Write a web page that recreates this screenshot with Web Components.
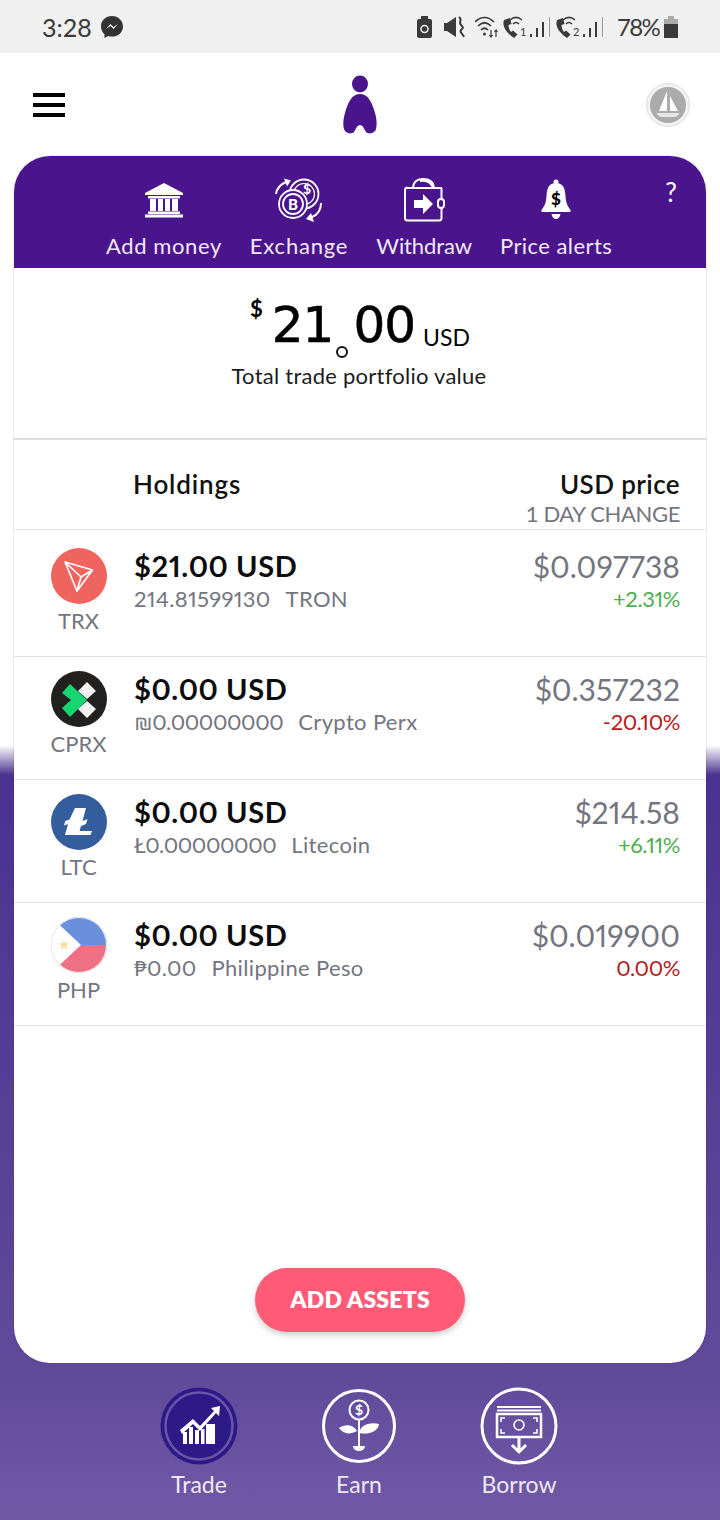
<!DOCTYPE html>
<html lang="en">
<head>
<meta charset="utf-8">
<title>Trade portfolio</title>
<style>
  html, body { margin: 0; padding: 0; }
  body {
    width: 720px;
    height: 1520px;
    overflow: hidden;
    font-family: Lato, "Open Sans", sans-serif;
    background: linear-gradient(#fff 745px, #4a3290 775px, #5f4a9a 1370px, #7159a6 1520px);
  }
</style>
</head>
<body>
<status-bar></status-bar>
<app-header></app-header>
<trade-card>
  <action-bar slot="top">
    <action-item label="Add money" style="--ls:.6px">
      <svg viewBox="0 0 40 36" width="40" height="36" fill="#fff"><path d="M20 1 39 11v2H1v-2z"/><rect x="4" y="14" width="32" height="2.500"/><rect x="6" y="17" width="6" height="12"/><rect x="14" y="17" width="5" height="12"/><rect x="21" y="17" width="5" height="12"/><rect x="28" y="17" width="6" height="12"/><rect x="4" y="29.500" width="32" height="2.500"/><rect x="1" y="32.500" width="38" height="3"/></svg>
    </action-item>
    <action-item label="Exchange" style="--ls:.8px">
      <svg viewBox="0 0 50 46" width="50" height="46" fill="none" stroke="#fff" stroke-width="1.800"><circle cx="30" cy="17" r="14.500"/><circle cx="30" cy="17" r="10.500" stroke-width="1.200"/><circle cx="19" cy="27" r="14" fill="#4a148c"/><circle cx="19" cy="27" r="10"/><path d="M2 17C3 11 7 7 12 5" stroke-width="2"/><path d="M10 1.500l7 2-4 6z" fill="#fff" stroke="none"/><path d="M47 26c0 7-4 12-9 14" stroke-width="2"/><path d="M40 45l-8-3 5-6z" fill="#fff" stroke="none"/><text x="19" y="32.500" font-family="Lato, sans-serif" font-weight="900" font-size="15" fill="#fff" stroke="none" text-anchor="middle">B</text><text x="33" y="17" font-family="Lato, sans-serif" font-weight="700" font-size="14" fill="#fff" stroke="none" text-anchor="middle">$</text></svg>
    </action-item>
    <action-item label="Withdraw" style="--ls:-.1px">
      <svg viewBox="0 0 44 44" width="44" height="44" fill="none" stroke="#fff" stroke-width="2"><path d="M5 10h35M11 9C12 2 17 1 21 1c5 0 10 2 11 8M18 3c4-1 11 0 13 7"/><path d="M3 12v28c0 1.500 1 2.500 2.500 2.500H37c1.500 0 2.500-1 2.500-2.500V30M3 12c0-1.500 1-2.500 2.500-2.500M39.500 10v11"/><rect x="36" y="21" width="6" height="9" rx="3"/><path d="M12 22h9v-6l10 10-10 10v-6h-9z" fill="#fff" stroke="none"/></svg>
    </action-item>
    <action-item label="Price alerts" style="--ls:.45px">
      <svg viewBox="0 0 30 42" width="30" height="42" fill="#fff"><circle cx="15" cy="3" r="2.500"/><path d="M15 4c7 0 9 5 9.500 13 .4 7 2 10 5 14v2H.5v-2c3-4 4.600-7 5-14C6 9 8 4 15 4z"/><path d="M10.500 35h9c-.5 3-2.300 5-4.500 5s-4-2-4.500-5z"/><text x="15" y="26" font-family="Lato, sans-serif" font-weight="900" font-size="17" fill="#000" text-anchor="middle">$</text></svg>
    </action-item>
  </action-bar>
  <portfolio-total></portfolio-total>
  <holdings-head></holdings-head>

  <asset-row symbol="TRX" amount="$21.00 USD" qty="214.81599130" name="TRON" price="$0.097738" change="+2.31%" tone="up" style="--qty-ls:.3px">
    <svg slot="icon" viewBox="0 0 56 56" width="56" height="56"><circle cx="28" cy="28" r="28" fill="#f0645f"/><path d="M14 14 41.500 22 26 43zM14 14 30 29 41.500 22M30 29 26 43" fill="none" stroke="#fff" stroke-width="1.700" stroke-linejoin="round"/></svg>
  </asset-row>
  <asset-row symbol="CPRX" amount="$0.00 USD" qty="₪0.00000000" name="Crypto Perx" price="$0.357232" change="-20.10%" tone="down" style="--qty-ls:-.4px">
    <svg slot="icon" viewBox="0 0 56 56" width="56" height="56"><circle cx="28" cy="28" r="28" fill="#23211f"/><path d="M11 22 19 13 36 29 19 46 11 37 20 29z" fill="#16d672"/><path d="M36 11 45 20 36 28 27 20zM36 30 45 38 36 47 27 38z" fill="#f2f2f2"/></svg>
  </asset-row>
  <asset-row symbol="LTC" amount="$0.00 USD" qty="Ł0.00000000" name="Litecoin" price="$214.58" change="+6.11%" tone="up" style="--qty-ls:-.4px">
    <svg slot="icon" viewBox="0 0 56 56" width="56" height="56"><circle cx="28" cy="28" r="28" fill="#345d9d"/><path d="M24 14h11l-3.500 13 5-2-1.500 5-5 2-1.500 5H41l-1.500 4H14l3-11-4 1.500 1.200-4.500 4.300-1.600z" fill="#fff"/></svg>
  </asset-row>
  <asset-row symbol="PHP" amount="$0.00 USD" qty="₱0.00" name="Philippine Peso" price="$0.019900" change="0.00%" tone="down" style="--qty-ls:.3px">
    <svg slot="icon" viewBox="0 0 56 56" width="56" height="56"><defs><clipPath id="php"><circle cx="28" cy="28" r="28"/></clipPath></defs><g clip-path="url(#php)"><rect width="56" height="28" fill="#6a8fdd"/><rect y="28" width="56" height="28" fill="#ee7085"/><path d="M-2-2 30 28-2 58z" fill="#fff"/><path d="M13 23l1.500 3.200 3.500.3-2.600 2.300.8 3.400-3.200-1.800-3.200 1.800.8-3.400L8 26.500l3.500-.3z" fill="#f0e3a0"/></g><circle cx="28" cy="28" r="27.500" fill="none" stroke="#f2f2f2"/></svg>
  </asset-row>

  <add-button slot="bottom">ADD ASSETS</add-button>
</trade-card>
<bottom-nav>
  <nav-item label="Trade" active>
    <svg viewBox="0 0 78 78" width="78" height="78"><circle cx="39" cy="39" r="38.500" fill="#2d1a87"/><circle cx="39" cy="39" r="33.500" fill="none" stroke="#6a55a8" stroke-width="2.500"/><path d="M20 43 33 32l7 7 14-15-3-3 9-2-1 10-3-3-16 18-7-7-11 10z" fill="#fff"/><path d="M23 45h4v12h-4zM29 40h4v17h-4zM35 43h4v14h-4zM41 42h3.500v15H41zM46 37h9v20h-9z" fill="#fff"/></svg>
  </nav-item>
  <nav-item label="Earn">
    <svg viewBox="0 0 78 78" width="78" height="78" fill="none" stroke="#fff"><circle cx="39" cy="39" r="35.500" stroke-width="3"/><circle cx="39" cy="23" r="9.500" stroke-width="2"/><text x="39" y="28" font-family="Lato, sans-serif" font-weight="700" font-size="14" fill="#fff" stroke="none" text-anchor="middle">$</text><path d="M39 33v26" stroke-width="2"/><path d="M19 41c7-5 15-3 18 3-7 4-14 3-18-3zM59 37c-8-2-18 0-20 9 9 2 19-1 20-9z" fill="#fff" stroke="none"/><path d="M33 59h12c0 3-3 5-6 5s-6-2-6-5z" fill="#fff" stroke="none"/></svg>
  </nav-item>
  <nav-item label="Borrow">
    <svg viewBox="0 0 78 78" width="78" height="78" fill="none" stroke="#fff"><circle cx="39" cy="39" r="37" stroke-width="3"/><path d="M17 20h44M17 23.500h44" stroke-width="2"/><rect x="17" y="27" width="44" height="23" stroke-width="2.500"/><circle cx="39" cy="38" r="5" stroke-width="1.600"/><path d="M21 35v-4h4M57 35v-4h-4M21 42v4h4M57 42v4h-4" stroke-width="1.600"/><path d="M39 50v15M32 58l7 7 7-7" stroke-width="3"/></svg>
  </nav-item>
</bottom-nav>

<script>
const FONT = 'Lato, "Open Sans", sans-serif'

// handset + wifi arcs + sim number + signal bars, used twice in the status bar
const simIcon = n => `
  <svg viewBox="0 0 50 24" width="50" height="24" fill="#3a3a3a">
    <path d="M2 5c-2 5 1 12 10 18l3.500-3.500-4.500-4-2 1.500c-1.500-2-2.500-4.500-2.500-7l3-1-1.500-6z"/>
    <path d="M8 5c4-3.500 8-3.500 12 0M11 9c2-2 4-2 6 0" fill="none" stroke="#3a3a3a" stroke-width="1.600"/>
    <text x="18" y="20.500" font-size="11" font-family="Lato, sans-serif">${n}</text>
    <rect x="28" y="19" width="2" height="3"/><rect x="34" y="13" width="2" height="9"/><rect x="40" y="7" width="2" height="15"/>
    <rect x="47" y="2" width="1" height="20" fill="#999"/>
  </svg>`

class StatusBar extends HTMLElement {
  constructor() {
    super()
    this.attachShadow({ mode: 'open' }).innerHTML = `
      <style>
        :host {
          display: flex;
          align-items: center;
          justify-content: space-between;
          box-sizing: border-box;
          height: 53px;
          padding: 0 42px 0 42px;
          background: #f0f0f0;
          color: #3a3a3a;
          font: 400 25px ${FONT};
        }
        .side { display: flex; align-items: center; }
        .left { gap: 8px; }
        svg { display: block; }
        .pct { width: 43px; font-size: 24px; letter-spacing: -1.700px; white-space: nowrap; }
      </style>
      <div class="side left">
        <span>3:28</span>
        <svg viewBox="0 0 24 24" width="24" height="24"><path d="M12 1C5.700 1 1 5.500 1 11.500c0 3.200 1.300 5.800 3.500 7.700V23l3.600-2c1.200.4 2.500.6 3.900.6 6.300 0 11-4.500 11-10.100S18.300 1 12 1z" fill="#333"/><path d="M6 14l4.500-5 3 3 4.500-3-4.500 5-3-3z" fill="#f0f0f0"/></svg>
      </div>
      <div class="side">
        <svg viewBox="0 0 15 24" width="15" height="24" fill="#3a3a3a"><rect x="4" y="1" width="7" height="3"/><rect x="0" y="4" width="15" height="19" rx="2"/><circle cx="7.500" cy="14" r="3.500" fill="none" stroke="#f0f0f0" stroke-width="1.500"/></svg>
        <svg viewBox="0 0 21 24" width="21" height="24" fill="#3a3a3a" style="margin-left:12px"><path d="M0 8h3l9-6v20l-9-6H0z"/><path d="M15 2c4 3-1 5 2 8s2 3 0 5 2 4 3 7" fill="none" stroke="#3a3a3a" stroke-width="2"/></svg>
        <svg viewBox="0 0 24 24" width="24" height="24" fill="none" stroke="#3a3a3a" stroke-width="1.700" style="margin-left:10px"><path d="M0 7c6-6 13-6 19 0M3 11c4.500-4.500 8.500-4.500 13 0M6 15c2.500-2.500 4.500-2.500 7 0"/><circle cx="9.500" cy="19" r="1.500" fill="#3a3a3a" stroke="none"/><path d="M16 15v7M14.500 20l1.500 2 1.500-2M21 22v-7M19.500 17l1.500-2 1.500 2" stroke-width="1.200"/></svg>
        <span style="margin-left:3px;display:block">${simIcon(1)}</span>
        <span style="margin-left:3px;display:block">${simIcon(2)}</span>
        <span class="pct" style="margin-left:12px">78%</span>
        <svg viewBox="0 0 14 24" width="14" height="24" style="margin-left:4px"><rect x="4" y="1" width="6" height="3" fill="#aaa"/><rect x="0" y="4" width="14" height="5" fill="#aaa"/><rect x="0" y="9" width="14" height="14" fill="#3a3a3a"/></svg>
      </div>
    `
  }
}

class AppHeader extends HTMLElement {
  constructor() {
    super()
    this.attachShadow({ mode: 'open' }).innerHTML = `
      <style>
        :host {
          display: flex;
          align-items: center;
          justify-content: space-between;
          box-sizing: border-box;
          height: 103px;
          padding: 0 30px 0 33px;
          background: #fff;
        }
        .menu { display: grid; gap: 6px; width: 32px; }
        .menu i { height: 4px; background: #000; }
        svg { display: block; }
      </style>
      <div class="menu"><i></i><i></i><i></i></div>
      <svg viewBox="0 0 36 60" width="36" height="60" style="margin-left:8px"><ellipse cx="18" cy="9" rx="8" ry="8.500" fill="#4a148c"/><path d="M18 19C26 19 30 27 33 38c2 7 2 12 1 16-1 4-7 6-10 3-2-3-3-7-6-7s-4 4-6 7c-3 3-9 1-10-3-1-4-1-9 1-16C6 27 10 19 18 19z" fill="#4a148c"/></svg>
      <svg viewBox="0 0 44 44" width="44" height="44"><circle cx="22" cy="22" r="21.500" fill="#f2f2f2" stroke="#ddd"/><circle cx="22" cy="22" r="18" fill="#ababab"/><path d="M21 8 13 28h8zM24 13l8 15h-8z" fill="#fff"/><path d="M10 30h24l-4 4H14z" fill="#e6e6e6"/></svg>
    `
  }
}

class TradeCard extends HTMLElement {
  constructor() {
    super()
    this.attachShadow({ mode: 'open' }).innerHTML = `
      <style>
        :host {
          display: flex;
          flex-direction: column;
          box-sizing: border-box;
          height: 1207px;
          margin: 0 14px;
          border-radius: 36px;
          overflow: hidden;
          background: #fff;
          box-shadow: 0 0 0 1px rgba(0,0,0,.07);
        }
        .bottom { margin-top: auto; display: flex; justify-content: center; padding-bottom: 31px; }
      </style>
      <slot name="top"></slot>
      <slot></slot>
      <div class="bottom"><slot name="bottom"></slot></div>
    `
  }
}

class ActionBar extends HTMLElement {
  constructor() {
    super()
    this.attachShadow({ mode: 'open' }).innerHTML = `
      <style>
        :host {
          display: block;
          position: relative;
          box-sizing: border-box;
          height: 112px;
          background: #4a148c;
        }
        .items { display: flex; gap: 28px; padding-left: 92px; }
        .help {
          position: absolute;
          top: 20px;
          right: 29px;
          color: #fff;
          font: 400 26px ${FONT};
        }
      </style>
      <div class="items"><slot></slot></div>
      <span class="help">?</span>
    `
  }
}

class ActionItem extends HTMLElement {
  constructor() {
    super()
    this.attachShadow({ mode: 'open' }).innerHTML = `
      <style>
        :host {
          display: flex;
          flex-direction: column;
          align-items: center;
          color: #f3e9fb;
          font: 400 22px ${FONT};
        }
        .icon { display: flex; align-items: center; justify-content: center; height: 50px; margin-top: 19px; }
        .label { margin-top: 8px; line-height: 26px; white-space: nowrap; letter-spacing: var(--ls, 0); }
      </style>
      <div class="icon"><slot></slot></div>
      <div class="label">${this.getAttribute('label')}</div>
    `
  }
}

class PortfolioTotal extends HTMLElement {
  constructor() {
    super()
    this.attachShadow({ mode: 'open' }).innerHTML = `
      <style>
        :host {
          display: block;
          box-sizing: border-box;
          height: 172px;
          padding-top: 28px;
          border-bottom: 2px solid #ddd;
          color: #000;
          text-align: center;
        }
        .value { display: flex; justify-content: center; align-items: baseline; height: 58px; line-height: 58px; }
        .cur { font: 700 22px ${FONT}; align-self: flex-start; line-height: 26px; margin-right: 9px; }
        .num { font: 400 50px "DejaVu Sans", sans-serif; -webkit-text-stroke: .6px #000; letter-spacing: -1px; }
        .dot { display: inline-block; position: relative; width: 20px; color: transparent; -webkit-text-stroke: 0; }
        .dot::after {
          content: "";
          position: absolute;
          left: 3px;
          bottom: -4px;
          width: 8px;
          height: 8px;
          border: 2.500px solid #111;
          border-radius: 50%;
        }
        .unit { font: 400 23px/20px ${FONT}; margin-left: 8px; align-self: flex-end; margin-bottom: 7px; }
        .caption { margin: 8px 2px 0 0; font: 400 22px ${FONT}; color: #1c1c1c; letter-spacing: .25px; }
      </style>
      <div class="value">
        <span class="cur">$</span>
        <span class="num">21<span class="dot">.</span>00</span>
        <span class="unit">USD</span>
      </div>
      <div class="caption">Total trade portfolio value</div>
    `
  }
}

class HoldingsHead extends HTMLElement {
  constructor() {
    super()
    this.attachShadow({ mode: 'open' }).innerHTML = `
      <style>
        :host {
          display: flex;
          justify-content: space-between;
          box-sizing: border-box;
          height: 90px;
          margin-bottom: 4px;
          padding: 28px 26px 0 119px;
          border-bottom: 1px solid #e2e2e2;
          font: 600 26px ${FONT};
          color: #111;
        }
        .right { text-align: right; }
        .sub { font: 400 22px ${FONT}; color: #73757f; line-height: 28px; letter-spacing: -.35px; }
        .title { line-height: 32px; letter-spacing: .4px; }
        .holdings { letter-spacing: .85px; }
      </style>
      <div class="title holdings">Holdings</div>
      <div class="right">
        <div class="title">USD price</div>
        <div class="sub">1 DAY CHANGE</div>
      </div>
    `
  }
}

class AssetRow extends HTMLElement {
  constructor() {
    super()
    const a = name => this.getAttribute(name)
    this.attachShadow({ mode: 'open' }).innerHTML = `
      <style>
        :host {
          display: grid;
          grid-template-columns: 111px 1fr auto;
          box-sizing: border-box;
          height: 123px;
          padding: 14px 26px 0 9px;
          border-bottom: 1px solid #e2e2e2;
          font-family: ${FONT};
          font-variant-numeric: proportional-nums;
        }
        .coin { display: flex; flex-direction: column; align-items: center; }
        .coin div { display: block; height: 56px; }
        .symbol { font-size: 22px; line-height: 28px; margin-top: 3px; color: #73757f; }
        .amount { font-size: 29px; font-weight: 700; line-height: 36px; color: #0c0c0c; letter-spacing: .6px; }
        .detail { display: flex; gap: 15px; font-size: 22px; line-height: 30px; color: #73757f; white-space: nowrap; }
        .qty { letter-spacing: var(--qty-ls, 0); }
        .name { letter-spacing: .35px; }
        .right { text-align: right; }
        .price { font-size: 30px; line-height: 36px; color: #73757f; letter-spacing: .1px; }
        .change { font-size: 22px; line-height: 30px; letter-spacing: -.4px; }
        .up { color: #4caf50; }
        .down { color: #b71c1c; }
      </style>
      <div class="coin">
        <div><slot name="icon"></slot></div>
        <span class="symbol">${a('symbol')}</span>
      </div>
      <div>
        <div class="amount">${a('amount')}</div>
        <div class="detail"><span class="qty">${a('qty')}</span><span class="name">${a('name')}</span></div>
      </div>
      <div class="right">
        <div class="price">${a('price')}</div>
        <div class="change ${a('tone')}">${a('change')}</div>
      </div>
    `
  }
}

class AddButton extends HTMLElement {
  constructor() {
    super()
    this.attachShadow({ mode: 'open' }).innerHTML = `
      <style>
        :host {
          display: flex;
          align-items: center;
          justify-content: center;
          box-sizing: border-box;
          width: 210px;
          height: 64px;
          padding-bottom: 2px;
          border-radius: 32px;
          background: #ff5a76;
          box-shadow: 0 3px 6px rgba(0,0,0,.2);
          color: #fff;
          font: 800 23px ${FONT};
          letter-spacing: .2px;
        }
      </style>
      <slot></slot>
    `
  }
}

class BottomNav extends HTMLElement {
  constructor() {
    super()
    this.attachShadow({ mode: 'open' }).innerHTML = `
      <style>
        :host {
          display: flex;
          justify-content: center;
          gap: 82px;
          padding: 24px 2px 0 0;
        }
      </style>
      <slot></slot>
    `
  }
}

class NavItem extends HTMLElement {
  constructor() {
    super()
    this.attachShadow({ mode: 'open' }).innerHTML = `
      <style>
        :host {
          display: flex;
          flex-direction: column;
          align-items: center;
          width: 78px;
          color: #efe9f7;
          font: 400 23px ${FONT};
        }
        ::slotted(svg) { display: block; }
        .label { margin-top: 4px; line-height: 30px; }
      </style>
      <slot></slot>
      <div class="label">${this.getAttribute('label')}</div>
    `
  }
}

customElements.define('status-bar', StatusBar)
customElements.define('app-header', AppHeader)
customElements.define('trade-card', TradeCard)
customElements.define('action-bar', ActionBar)
customElements.define('action-item', ActionItem)
customElements.define('portfolio-total', PortfolioTotal)
customElements.define('holdings-head', HoldingsHead)
customElements.define('asset-row', AssetRow)
customElements.define('add-button', AddButton)
customElements.define('bottom-nav', BottomNav)
customElements.define('nav-item', NavItem)
</script>
</body>
</html>
